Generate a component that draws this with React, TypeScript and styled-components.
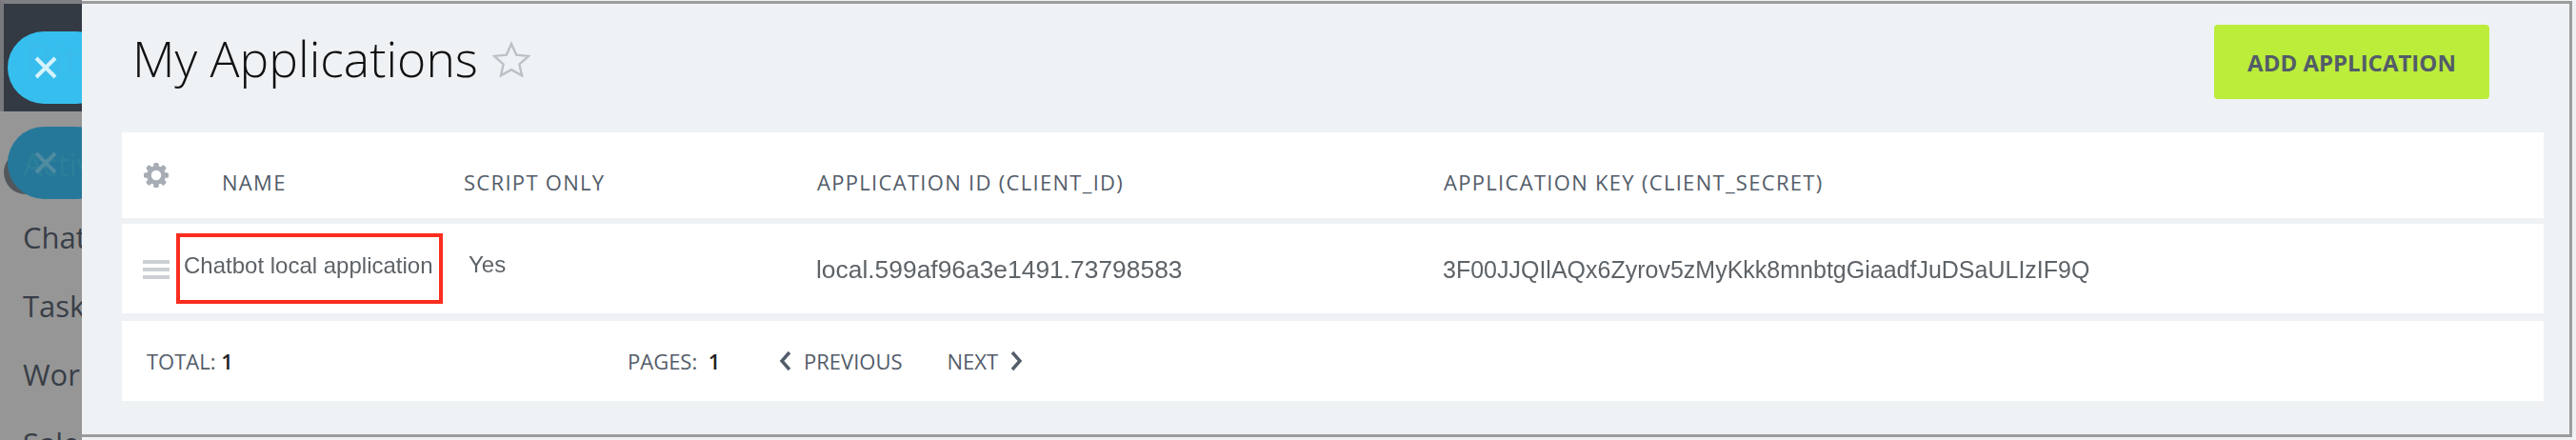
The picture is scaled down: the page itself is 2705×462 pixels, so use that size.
import { createGlobalStyle, styled } from "styled-components";

const GlobalStyle = createGlobalStyle`
  html, body {
    margin: 0;
    padding: 0;
    background: #eef2f5;
  }
  body {
    font-family: "Open Sans", sans-serif;
    width: 2705px;
    height: 462px;
    overflow: hidden;
  }
`;

const Page = styled.div`
  display: flex;
  width: 2705px;
  height: 462px;
  overflow: hidden;
`;

const Sidebar = styled.aside`
  position: relative;
  flex: 0 0 86px;
  height: 462px;
  background: #969696;
  overflow: hidden;
`;

const SidebarTop = styled.div`
  height: 117px;
  box-sizing: border-box;
  background: #343a44;
  border-top: 4px solid #7d7f83;
  border-left: 4px solid #77797d;
`;

const SideMenu = styled.nav`
  display: flex;
  flex-direction: column;
  gap: 31px;
  padding: 112px 0 0 24px;
`;

const SideItem = styled.div`
  font-size: 31px;
  line-height: 41px;
  color: #383e47;
  white-space: nowrap;
`;

const PillShadow = styled.div`
  position: absolute;
  left: 4px;
  top: 158px;
  width: 60px;
  height: 46px;
  border-radius: 24px;
  background: #53575c;
`;

const ClosePill = styled.div<{ $dim?: boolean }>`
  position: absolute;
  left: 8px;
  top: ${(p) => (p.$dim ? "133px" : "33px")};
  width: 110px;
  height: 76px;
  border-radius: 38px;
  background: ${(p) => (p.$dim ? "#26789a" : "#36bfee")};
  color: ${(p) => (p.$dim ? "#4f8ba1" : "#d6f3fc")};
  display: flex;
  align-items: center;
  padding-left: 28px;
  box-sizing: border-box;
`;

const PillGhost = styled.span<{ $dim?: boolean }>`
  position: absolute;
  left: ${(p) => (p.$dim ? "16px" : "18px")};
  top: ${(p) => (p.$dim ? "20px" : "2px")};
  font-size: ${(p) => (p.$dim ? "33px" : "46px")};
  line-height: 1.2;
  color: ${(p) => (p.$dim ? "#2c8099" : "#3bbbeb")};
  white-space: nowrap;
`;

const CloseSvg = styled.svg`
  position: relative;
  width: 24px;
  height: 24px;
`;

const Panel = styled.main`
  flex: 0 0 2615px;
  height: 458px;
  margin-top: 1px;
  box-sizing: border-box;
  background: #eef2f5;
  border: solid #9c9c9c;
  border-width: 3px 3px 3px 0;
  display: flex;
  flex-direction: column;
`;

const TitleBar = styled.header`
  height: 135px;
  flex: none;
  padding: 22px 84px 0 53px;
  box-sizing: border-box;
  display: flex;
  justify-content: space-between;
  align-items: flex-start;
`;

const TitleGroup = styled.div`
  display: flex;
  align-items: center;
  gap: 15px;
`;

const Title = styled.h1`
  margin: 0;
  font-size: 51.6px;
  line-height: 71px;
  font-weight: 300;
  color: #111;
`;

const AddButton = styled.button`
  width: 289px;
  height: 78px;
  border: 0;
  border-radius: 4px;
  background: #bbed3a;
  color: #535c69;
  font-family: "Open Sans", sans-serif;
  font-size: 24px;
  font-weight: 700;
`;

const Table = styled.section`
  margin: 0 27px 0 42px;
  display: flex;
  flex-direction: column;
`;

const HeadRow = styled.div`
  height: 90px;
  background: #fff;
  display: grid;
  grid-template-columns: 105px 254px 371px 658px 1fr;
  align-items: center;
  color: #535c69;
`;

const HeadCell = styled.div`
  font-size: 22px;
  font-weight: 500;
  letter-spacing: 1.3px;
  white-space: nowrap;
  padding-top: 14px;
`;

const GearCell = styled.div`
  padding-left: 23px;
  display: flex;
`;

const DataRow = styled.div`
  height: 94px;
  margin-top: 6px;
  background: #fff;
  display: grid;
  grid-template-columns: 57px 307px 365px 658px 1fr;
  align-items: center;
`;

const Handle = styled.div`
  margin-left: 22px;
  width: 28px;
  display: flex;
  flex-direction: column;
  gap: 4px;
  padding-top: 2px;

  span {
    height: 4px;
    background: #ccd0d4;
  }
`;

const NameBox = styled.div`
  width: 280px;
  height: 74px;
  box-sizing: border-box;
  border: 4px solid #fb2d1f;
  padding: 16px 0 0 4px;
  font-family: "Liberation Sans", Arial, sans-serif;
  font-size: 24px;
  line-height: 28px;
  color: #5e6368;
  white-space: nowrap;
`;

const BlurText = styled.span`
  display: block;
  filter: blur(0.5px);
`;

const PlainCell = styled.div<{ $size: number; $shift: number }>`
  font-family: "Liberation Sans", Arial, sans-serif;
  font-size: ${(p) => p.$size}px;
  color: #5e6368;
  white-space: nowrap;
  margin-top: ${(p) => p.$shift}px;
  filter: blur(0.6px);
`;

const Footer = styled.div`
  height: 84px;
  margin-top: 8px;
  background: #fff;
  display: flex;
  align-items: center;
  font-size: 22px;
  font-weight: 500;
  color: #535c69;
  padding-left: 26px;
`;

const Total = styled.div`
  width: 505px;
`;

const Strong = styled.span`
  color: #222;
  font-weight: 600;
`;

const Pages = styled.div`
  width: 159px;
`;

const NavLink = styled.div`
  display: flex;
  align-items: center;
  gap: 12px;
  margin-right: 47px;
`;

function Star() {
  return (
    <svg width="40" height="38" viewBox="0 0 40 38" fill="none">
      <path
        d="M20 3 25.2 14.6 38 15.9 28.4 24.4 31.1 36.4 20 30.1 8.9 36.4 11.6 24.4 2 15.9 14.8 14.6Z"
        stroke="#bcc1c7"
        strokeWidth="2.4"
      />
    </svg>
  );
}

function Gear() {
  const teeth = [0, 45, 90, 135, 180, 225, 270, 315];
  return (
    <svg width="26" height="26" viewBox="0 0 26 26">
      {teeth.map((a) => (
        <rect key={a} x="10.5" y="0" width="5" height="26" rx="1.5" fill="#a7adb4" transform={`rotate(${a} 13 13)`} />
      ))}
      <circle cx="13" cy="13" r="10" fill="#a7adb4" />
      <circle cx="13" cy="13" r="5.2" fill="#fff" />
    </svg>
  );
}

function Chevron({ right }: { right?: boolean }) {
  return (
    <svg width="14" height="22" viewBox="0 0 14 22" fill="none">
      <path d={right ? "M3 2 11 11 3 20" : "M11 2 3 11 11 20"} stroke="#535c69" strokeWidth="3.4" />
    </svg>
  );
}

function CloseMark() {
  return (
    <CloseSvg viewBox="0 0 24 24" fill="none">
      <path d="M2 2 22 22M22 2 2 22" stroke="currentColor" strokeWidth="4" />
    </CloseSvg>
  );
}

export default function App() {
  return (
    <Page>
      <GlobalStyle />
      <Sidebar>
        <SidebarTop />
        <SideMenu>
          <SideItem>Chat</SideItem>
          <SideItem>Task</SideItem>
          <SideItem>Work</SideItem>
          <SideItem>Sales</SideItem>
        </SideMenu>
        <PillShadow />
        <ClosePill>
          <PillGhost>Bit</PillGhost>
          <CloseMark />
        </ClosePill>
        <ClosePill $dim>
          <PillGhost $dim>Activ</PillGhost>
          <CloseMark />
        </ClosePill>
      </Sidebar>
      <Panel>
        <TitleBar>
          <TitleGroup>
            <Title>My Applications</Title>
            <Star />
          </TitleGroup>
          <AddButton>ADD APPLICATION</AddButton>
        </TitleBar>
        <Table>
          <HeadRow>
            <GearCell>
              <Gear />
            </GearCell>
            <HeadCell>NAME</HeadCell>
            <HeadCell>SCRIPT ONLY</HeadCell>
            <HeadCell>APPLICATION ID (CLIENT_ID)</HeadCell>
            <HeadCell>APPLICATION KEY (CLIENT_SECRET)</HeadCell>
          </HeadRow>
          <DataRow>
            <Handle>
              <span />
              <span />
              <span />
            </Handle>
            <NameBox>
              <BlurText>Chatbot local application</BlurText>
            </NameBox>
            <PlainCell $size={24} $shift={-8}>Yes</PlainCell>
            <PlainCell $size={26.4} $shift={2}>local.599af96a3e1491.73798583</PlainCell>
            <PlainCell $size={25} $shift={2}>3F00JJQIlAQx6Zyrov5zMyKkk8mnbtgGiaadfJuDSaULIzIF9Q</PlainCell>
          </DataRow>
          <Footer>
            <Total>
              TOTAL: <Strong>1</Strong>
            </Total>
            <Pages>
              PAGES: &nbsp;<Strong>1</Strong>
            </Pages>
            <NavLink>
              <Chevron />
              PREVIOUS
            </NavLink>
            <NavLink>
              NEXT
              <Chevron right />
            </NavLink>
          </Footer>
        </Table>
      </Panel>
    </Page>
  );
}
